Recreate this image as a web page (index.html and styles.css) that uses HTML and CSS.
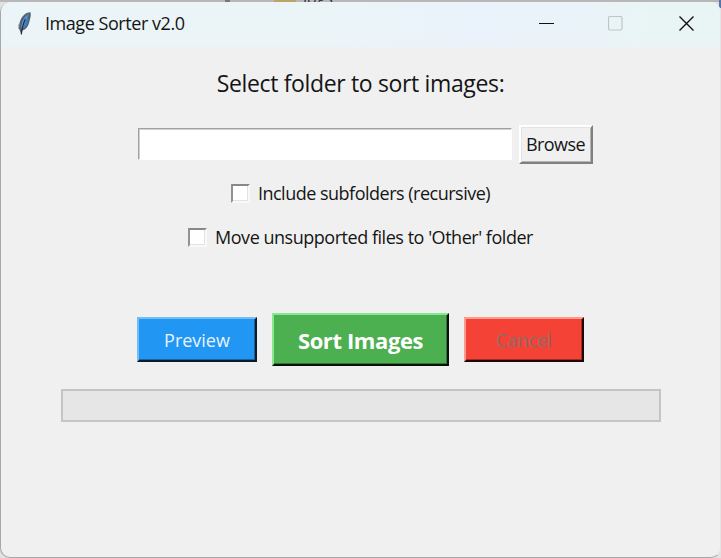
FILE: index.html
```html
<!DOCTYPE html>
<html lang="en">
<head>
<meta charset="utf-8">
<title>Image Sorter v2.0</title>
<link rel="stylesheet" href="styles.css">
</head>
<body>
<div class="desktop" aria-hidden="true"><i class="mark"></i><i class="folder"></i><span class="behind">logs</span><i class="edge"></i><i class="mark mark-low"></i></div>
<main class="window">
  <header class="titlebar">
    <svg class="feather" width="15" height="26" viewBox="0 0 15 26">
      <path d="M13.500 1.200C9.500 1 5.200 4.500 3.500 9C1.800 13 1.500 16.500 2.500 19L4.300 23.500L5.400 19.500C8.700 18.500 11.300 15.500 12.200 11.500C13 8 14.500 4 13.500 1.200Z" fill="#56626c"/>
      <path d="M12.200 2.800C8 5 5.500 9 4.600 13.500L4.200 17.500C7 15.500 9 12 9.800 8.500C10.300 6 11.700 4 12.200 2.800Z" fill="#4c98e4"/>
      <path d="M11.200 8L8 13L10.300 11.500L6.500 17" fill="none" stroke="#3d7fcb" stroke-width="1.700"/>
      <path d="M8.500 8Q5.500 13.500 4.300 23.500" fill="none" stroke="#202830" stroke-width="1.100"/>
      <path d="M1.800 13L1.500 18" stroke="#a8afb4" stroke-width="1"/>
    </svg>
    <h1 class="title"><span>Image Sorter v2.0</span></h1>
    <div class="controls">
      <svg width="16" height="16" viewBox="0 0 16 16"><path d="M0 7.500H15" stroke="#111" fill="none"/></svg>
      <svg width="16" height="16" viewBox="0 0 16 16"><rect x=".500" y=".500" width="13.500" height="13.500" rx="1.500" fill="none" stroke="#bdc5c7" stroke-width="1.200"/></svg>
      <svg width="16" height="16" viewBox="0 0 16 16"><path d="M.500 .500L14.500 14.500M14.500 .500L.500 14.500" stroke="#111" stroke-width="1.400" fill="none"/></svg>
    </div>
  </header>
  <section class="content">
    <p class="heading"><span>Select folder to sort images:</span></p>
    <div class="path-row">
      <input class="entry" type="text" aria-label="Folder">
      <button class="btn browse"><span>Browse</span></button>
    </div>
    <label class="check check-sub"><i class="box"></i><span>Include subfolders (recursive)</span></label>
    <label class="check check-other"><i class="box"></i><span>Move unsupported files to 'Other' folder</span></label>
    <div class="actions">
      <button class="btn preview"><span>Preview</span></button>
      <button class="btn sort"><span>Sort Images</span></button>
      <button class="btn cancel" disabled><span>Cancel</span></button>
    </div>
    <div class="progress" role="progressbar" aria-valuenow="0"></div>
  </section>
</main>
</body>
</html>
```
FILE: styles.css
```css
* { box-sizing: border-box; }
body {
  margin: 0;
  width: 721px;
  height: 558px;
  overflow: hidden;
  position: relative;
  background: #e2e2e2;
  font-family: "Open Sans", "Noto Sans", sans-serif;
  font-size: 18px;
  color: #151515;
}
span { white-space: nowrap; }
.desktop { position: absolute; inset: 0; overflow: hidden; background: linear-gradient(#b8b8b8 0 2px, transparent 2px); }
.desktop i, .behind { position: absolute; top: 0; height: 2px; }
.mark { left: 225px; width: 5px; background: #777; }
.folder { left: 274px; width: 22px; background: #bda365; }
.behind { left: 303px; top: -8px; height: 14px; font-size: 16px; line-height: 12px; color: #333344; }
.desktop .edge { left: 719px; width: 2px; height: 8px; background: #4b78af; }
.desktop .mark-low { top: 557px; height: 1px; }
.window {
  position: relative;
  height: 556px;
  margin-top: 2px;
  border: 1px solid #a8a8a8;
  border-top: 0;
  border-right-color: #e4e4e4;
  border-radius: 10px;
  overflow: hidden;
  background: #f0f0f0;
  display: flex;
  flex-direction: column;
}
.titlebar {
  height: 45px;
  flex: none;
  display: flex;
  align-items: center;
  padding-left: 16px;
  background: linear-gradient(100deg, #ebf4f7 0%, #ebf4f7 45%, #eaf3fb 65%, #eaf3f9 80%, #e9f5f5 90%);
}
.feather { flex: none; margin-top: -2px; }
.title { margin: -3px 0 0 13px; font-size: 18px; font-weight: 400; line-height: 24px; letter-spacing: -0.45px; flex: 1; }
.controls { display: flex; gap: 54px; margin: -1px 25px 0 0; }
.controls svg:nth-child(2) { margin: 0 1px 0 -1px; }
.content { display: flex; flex-direction: column; align-items: center; }
.heading { margin: 19px 0 0; font-size: 23px; line-height: 34px; letter-spacing: -0.35px; }
.path-row { display: flex; align-items: center; gap: 7px; margin-top: 25px; margin-left: 9px; }
.entry { width: 374px; height: 32px; margin-top: -2px; border: 1px solid; border-color: #a0a0a0 #fff #fff #a0a0a0; box-shadow: inset 1px 1px #d0d0d0; background: #fff; padding: 0; outline: 0; }
.btn { font-family: inherit; font-size: 18px; padding: 0; display: flex; align-items: center; justify-content: center; color: #151515; }
.browse { width: 74px; height: 39px; border: 2px solid; border-color: #fff #808080 #808080 #fff; background: #f0f0f0; box-shadow: inset 1px 1px #e3e3e3, inset -1px -1px #b5b5b5; letter-spacing: -0.6px; }
.browse span { margin-top: -2px; }
.check { display: flex; align-items: center; height: 24px; gap: 8px; letter-spacing: -0.5px; }
.check-sub { margin-top: 17px; }
.check-other { margin-top: 20px; letter-spacing: -0.47px; }
.box { width: 19px; height: 19px; flex: none; background: #fff; border: 2px solid; border-color: #888 #f8f8f8 #f8f8f8 #929292; box-shadow: inset -1px -1px #e3e3e3; }
.actions { display: flex; align-items: center; gap: 15px; margin: 64px 0 0; }
.preview, .cancel { width: 120px; height: 45px; border: 2px solid; }
.preview { background: #2196f3; color: #e6f3ff; border-color: #71bdf8 #0b1a26 #0b1a26 #71bdf8; box-shadow: inset -1px -1px #1563a2; }
.sort { width: 177px; height: 53px; border: 2px solid; background: #4caf50; color: #fff; border-color: #87e98b #081109 #081109 #87e98b; box-shadow: inset -1px -1px #33743a; font-size: 22px; font-weight: 700; letter-spacing: -0.4px; }
.cancel { background: #f44336; color: #857068; border-color: #ff9a90 #1e0807 #1e0807 #ff9a90; box-shadow: inset -1px -1px #a32d24; }
.progress { width: 600px; height: 33px; margin: 23px 0 0 1px; border: 2px solid #c5c5c5; background: #e6e6e6; }
```
